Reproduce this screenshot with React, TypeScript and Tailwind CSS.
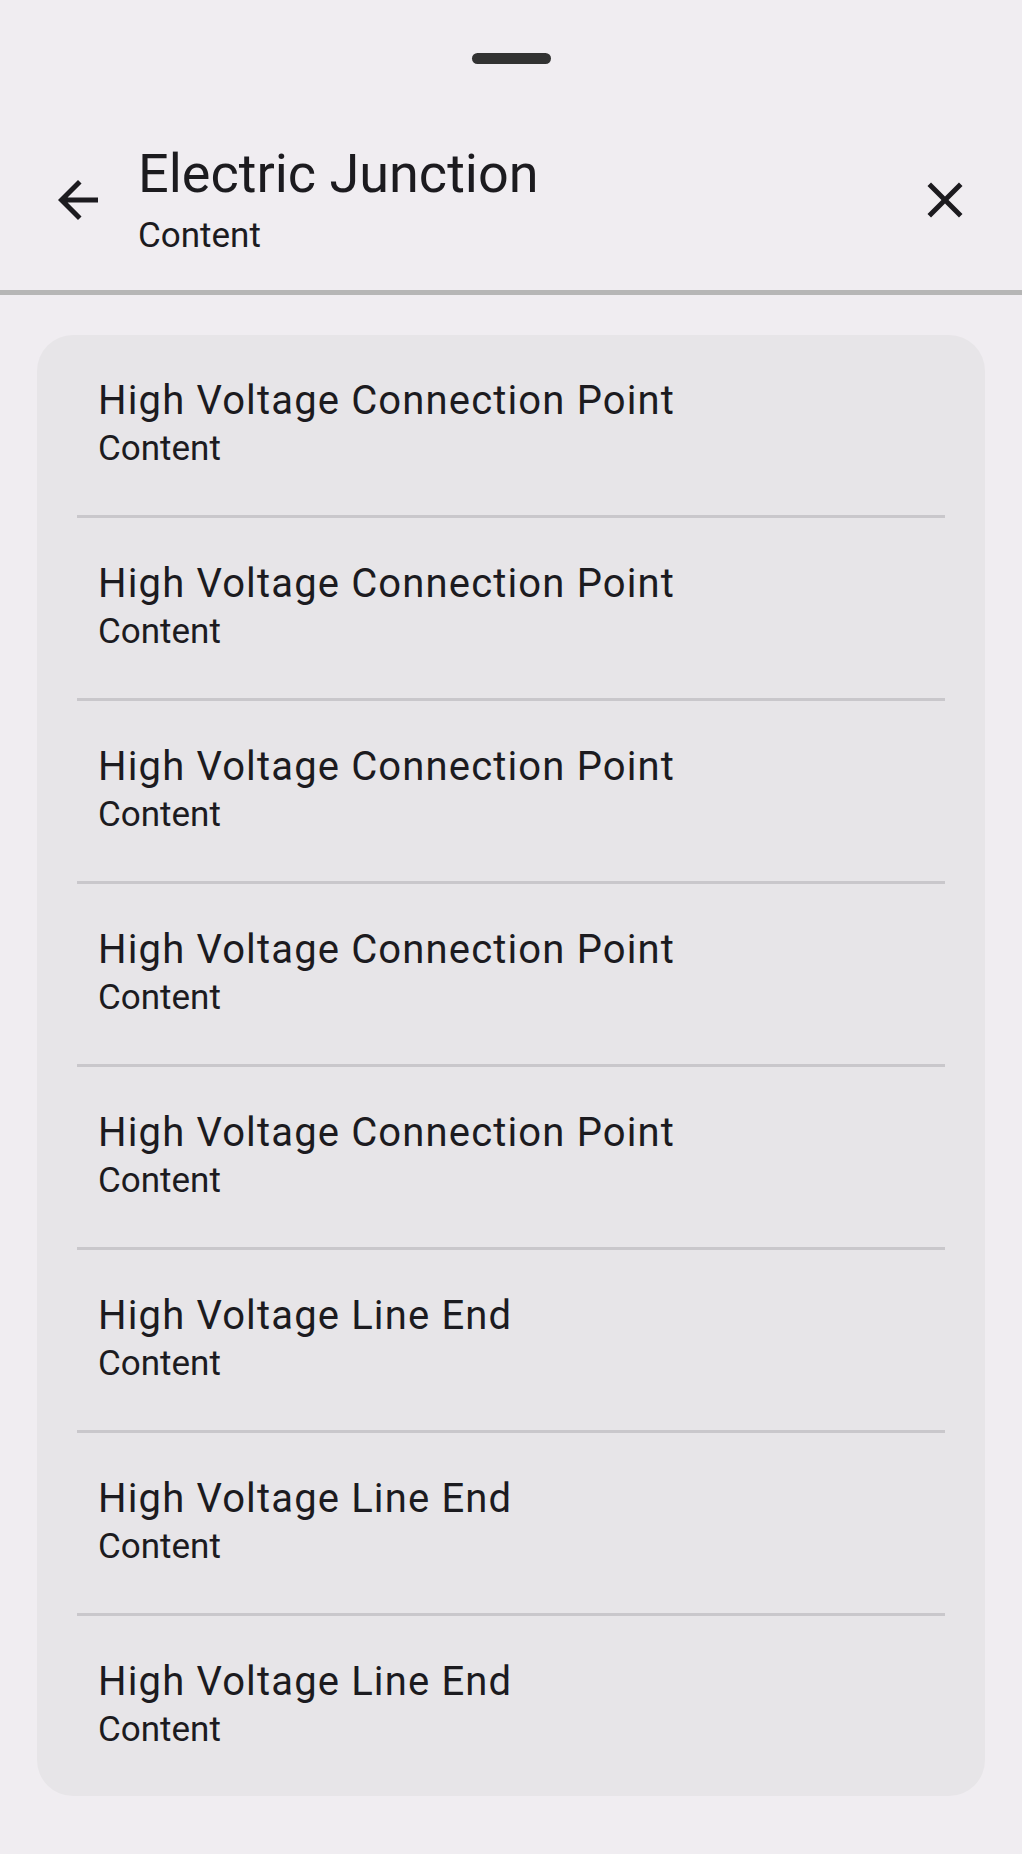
const items = [
  "High Voltage Connection Point",
  "High Voltage Connection Point",
  "High Voltage Connection Point",
  "High Voltage Connection Point",
  "High Voltage Connection Point",
  "High Voltage Line End",
  "High Voltage Line End",
  "High Voltage Line End",
];

const BackIcon = () => (
  <svg viewBox="0 0 24 24" className="w-[60px] h-[60px]" fill="#1c1b1f">
    <path d="M20 11H7.83l5.59-5.59L12 4l-8 8 8 8 1.41-1.41L7.83 13H20v-2z" />
  </svg>
);

const CloseIcon = () => (
  <svg viewBox="0 0 24 24" className="w-[60px] h-[60px]" fill="#1c1b1f">
    <path d="M19 6.41 17.59 5 12 10.59 6.41 5 5 6.41 10.59 12 5 17.59 6.41 19 12 13.41 17.59 19 19 17.59 13.41 12z" />
  </svg>
);

const App = () => {
  return (
    <div className="w-[1022px] min-h-[1854px] bg-[#f0edf1] text-[#1c1b1f] font-['Roboto',sans-serif]">
      {/* drag handle */}
      <div className="flex justify-center pt-[53px]">
        <div className="w-[79px] h-[11px] rounded-full bg-[#323232]" />
      </div>

      {/* header */}
      <div className="flex items-center pt-[78px] pb-[32px] pl-[48px] pr-[47px]">
        <button className="shrink-0">
          <BackIcon />
        </button>
        <div className="flex-1 ml-[30px]">
          <h1 className="text-[54px] leading-[64px] font-normal">Electric Junction</h1>
          <p className="mt-[8px] text-[35px] leading-[44px]">Content</p>
        </div>
        <button className="shrink-0">
          <CloseIcon />
        </button>
      </div>
      <div className="h-[5px] bg-[#b6b6b6]" />

      {/* list */}
      <div className="mx-[37px] mt-[40px] rounded-[36px] bg-[#e7e5e8] overflow-hidden">
        {items.map((title, i) => (
          <div key={i}>
            {i > 0 && <div className="mx-[40px] h-[3px] bg-[#c9c7cb]" />}
            <div className="h-[180px] pl-[61px] pt-[42px]">
              <h3 className="text-[40px] leading-[48px] tracking-[1.15px]">{title}</h3>
              <p className="mt-[4px] text-[35px] leading-[40px]">Content</p>
            </div>
          </div>
        ))}
      </div>
    </div>
  );
};

export default App;
